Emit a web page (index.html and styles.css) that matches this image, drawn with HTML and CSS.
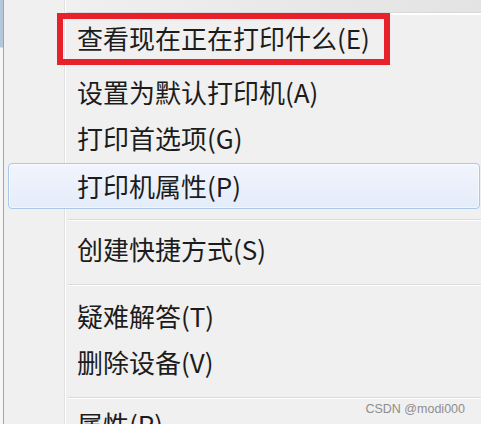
FILE: index.html
```html
<!DOCTYPE html>
<html lang="zh-CN">
<head>
<meta charset="utf-8">
<title>打印机菜单</title>
<link rel="stylesheet" href="styles.css">
</head>
<body>
<div class="screen">
  <div class="edge"></div>
  <div class="menu">
    <div class="topband"></div>
    <ul class="items">
      <li class="item marked">查看现在正在打印什么(E)</li>
      <li class="item first-plain">设置为默认打印机(A)</li>
      <li class="item">打印首选项(G)</li>
      <li class="item hover">打印机属性(P)</li>
      <li class="sep sep-a"></li>
      <li class="item after-a">创建快捷方式(S)</li>
      <li class="sep sep-b"></li>
      <li class="item after-b">疑难解答(T)</li>
      <li class="item">删除设备(V)</li>
      <li class="sep sep-c"></li>
      <li class="item after-c">属性(R)</li>
    </ul>
  </div>
</div>
<div class="watermark">CSDN @modi000</div>
</body>
</html>
```

FILE: styles.css
```css
html, body {
  margin: 0;
  padding: 0;
}
body {
  width: 481px;
  height: 424px;
  overflow: hidden;
  background: #f0f0f0;
  position: relative;
  font-family: "Noto Sans CJK SC", "Noto Sans", sans-serif;
}
.screen {
  display: flex;
  width: 481px;
  height: 424px;
}
.edge {
  width: 3px;
  flex: none;
  background: linear-gradient(to bottom, #b4c6d9 0, #b4c6d9 47px, #f6f6f6 48px, #f6f6f6 100%);
}
.menu {
  flex: 1;
  border-left: 1px solid #a3a3a3;
  background: linear-gradient(to right, #f0f0f0 0, #f0f0f0 60px, #e0e0e0 60px, #e0e0e0 61px, #ffffff 61px, #ffffff 62px, #f0f0f0 62px);
  overflow: hidden;
}
.topband {
  height: 12px;
  margin-left: 62px;
  background: linear-gradient(to right, #f0f0f0 0, #e9e9e9 50%, #e3e3e3 100%);
  border-bottom: 1px solid #dadada;
  box-shadow: 0 1px 0 #ffffff, 0 2px 0 #ffffff;
}
.items {
  list-style: none;
  margin: 0;
  padding: 0;
}
.item {
  height: 46px;
  line-height: 46px;
  padding-left: 73px;
  font-size: 26px;
  color: #1c1c1c;
  white-space: nowrap;
}
.item.marked {
  box-sizing: border-box;
  width: 333px;
  height: 52px;
  line-height: 38px;
  margin-left: 53px;
  margin-top: 0;
  padding-left: 14px;
  border: 6px solid #e8202a;
}
.item.first-plain {
  margin-top: 4px;
}
.item.hover {
  margin: 2px 1px 0 4px;
  padding-left: 68px;
  height: 44px;
  line-height: 44px;
  border: 1px solid #aac7ec;
  border-radius: 4px;
  background: linear-gradient(to bottom, #f1f5fc, #e4ecfa);
  box-shadow: inset 0 0 0 1px rgba(255, 255, 255, 0.55);
}
.sep {
  height: 1px;
  margin-left: 64px;
  background: #dcdcdc;
  border-bottom: 1px solid #ffffff;
}
.sep-a { margin-top: 10px; }
.item.after-a { margin-top: 5px; }
.sep-b { margin-top: 12px; }
.item.after-b { margin-top: 7px; }
.sep-c { margin-top: 12px; }
.item.after-c { margin-top: 2px; }
.watermark {
  position: absolute;
  right: 16px;
  top: 402px;
  font-family: "Liberation Sans", Arial, sans-serif;
  font-size: 12.5px;
  color: #8e8e8e;
  line-height: 15px;
}
```
